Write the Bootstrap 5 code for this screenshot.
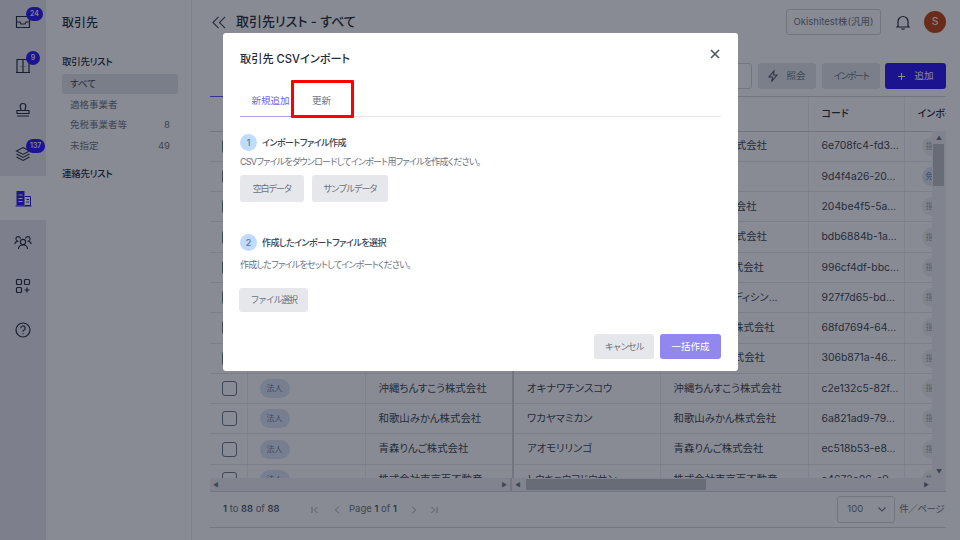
<!DOCTYPE html>
<html lang="ja">
<head>
<meta charset="UTF-8">
<title>取引先 CSVインポート</title>
<link href="https://cdn.jsdelivr.net/npm/bootstrap@5.3.0/dist/css/bootstrap.min.css" rel="stylesheet">
<style>
    html, body { height: 100%; overflow: hidden; }
    body { font-family: Inter, "Noto Sans CJK JP", sans-serif; font-feature-settings: "palt"; font-size: 10px; color: #374151; background: #fff; }
    .app-shell { width: 960px; height: 540px; }
    .rail { width: 46px; background: #e9e8f1; }
    .rail-item { height: 44px; position: relative; color: #1f2937; }
    .rail-item.is-active { background: #fff; color: #2410f5; }
    .rail-badge { position: absolute; top: 7px; left: 26px; min-width: 14px; height: 14px; padding: 0 4px; border-radius: 7px; background: #2410f5; color: #fff; font-size: 7px; font-weight: 500; line-height: 14px; text-align: center; }
    .subnav { width: 146px; padding: 0 13px 0 16px; border-right: 1px solid #eceef2; }
    .subnav-title { font-size: 12px; font-weight: 500; color: #1f2937; height: 45px; line-height: 45px; }
    .subnav-head { font-size: 9.5px; font-weight: 500; letter-spacing: -.3px; color: #1f2937; line-height: 12px; margin-top: 11px; margin-bottom: 6px; }
    .subnav-head.is-lower { margin-top: 12px; }
    .subnav-item { height: 20px; line-height: 20px; padding: 0 8px; margin-bottom: 0.5px; font-size: 9.5px; color: #6b7280; border-radius: 3px; }
    .subnav-item.is-active { background: #e3e4ea; color: #374151; }
    .main-pane { width: 768px; padding: 0 14px 0 18px; }
    .topbar { height: 44px; }
    .back-icon { margin-left: 2px; }
    .page-title { font-size: 13px; font-weight: 500; color: #1f2937; margin-left: 10px; }
    .org-btn { height: 26px; width: 95px; border: 1px solid #d1d5db; border-radius: 3px; font-size: 9.5px; color: #6b7280; line-height: 24px; text-align: center; margin-top: -1px; }
    .bell-icon { margin-left: 15px; }
    .avatar-dot { width: 22px; height: 22px; margin-left: 14px; border-radius: 50%; background: #c2410c; color: #fff; font-size: 10.5px; line-height: 22px; text-align: center; }
    .toolbar { height: 34px; margin-top: 19px; padding-bottom: 8px; border-bottom: 1px solid #d1d5db; position: relative; gap: 6px; }
    .toolbar-tab { position: absolute; left: 0; bottom: -1px; width: 30px; height: 1px; background: #5b4ff0; }
    .tool-btn { width: 58px; height: 26px; border-radius: 3px; background: #e5e7eb; color: #6b7280; font-size: 9.5px; padding: 0; border: 0; }
    .tool-tight { letter-spacing: -1.6px; }
    .tool-ghost { width: 40px; height: 26px; border: 1px solid #d1d5db; border-radius: 3px; background: #fff; }
    .tool-add { background: #2410f5; color: #fff; width: 61px; margin-left: -1px; }
    .grid-wrap { height: 381px; position: relative; overflow: hidden; }
    .data-grid { table-layout: fixed; width: 736px; border-collapse: collapse; margin: 0; font-size: 10.4px; color: #374151; }
    .col-pick { width: 37px; } .col-kind { width: 118px; } .col-name { width: 148px; } .col-kana { width: 147px; }
    .col-formal { width: 148px; } .col-code { width: 96px; } .col-state { width: 42px; }
    .data-grid th { height: 34px; font-weight: 500; font-size: 10px; color: #1f2937; padding: 0 13px; border-bottom: 1px solid #d1d5db; border-right: 1px solid #eceef2; white-space: nowrap; overflow: hidden; }
    .data-grid td { height: 30.3px; padding: 0 13px; border-bottom: 1px solid #e5e7eb; border-right: 1px solid #eceef2; white-space: nowrap; overflow: hidden; }
    .data-grid .pin-edge { border-right: 2px solid #d1d5db; }
    .data-grid .pick-cell { padding: 0 0 0 12px; }
    .data-grid .state-cell { padding-left: 17px; padding-right: 0; }
    .pick-box { display: block; width: 15px; height: 15px; border: 1px solid #6b7280; border-radius: 3px; background: #fff; }
    .kind-pill { display: inline-block; width: 30px; height: 19px; margin-left: -1px; border-radius: 10px; background: #dbe4f7; color: #6b7fa8; font-size: 8px; line-height: 19px; text-align: center; }
    .state-pill { display: inline-block; width: 30px; height: 19px; padding-left: 4px; border-radius: 10px; background: #eef0f3; color: #9ca3af; font-size: 8px; line-height: 19px; }
    .state-pill.is-exempt { background: #dbe4f7; color: #6b7fa8; }
    .scroll-y { position: absolute; top: 34px; right: 0; bottom: 0; width: 14px; background: #f1f1f4; }
    .scroll-y-thumb { position: absolute; top: 13px; left: 1px; width: 11px; height: 42px; background: #bfc0c6; }
    .scroll-x { width: 736px; height: 14px; border-bottom: 1px solid #d1d5db; background: #f1f1f4; }
    .scroll-x-left { width: 302px; border-right: 2px solid #d1d5db; }
    .scroll-x-right { width: 420px; position: relative; }
    .scroll-x-thumb { position: absolute; left: 14px; top: 1px; width: 180px; height: 11px; background: #bfc0c6; }
    .scroll-tip { font-size: 6px; color: #6b7280; line-height: 13px; padding: 0 3px; }
    .pager-bar { height: 36px; border-bottom: 1px solid #d1d5db; font-size: 9.5px; color: #6b7280; padding-left: 13px; padding-right: 2px; }
    .pager-bar b { color: #374151; font-weight: 500; }
    .pager-count { width: 88px; }
    .pager-icons { color: #9ca3af; gap: 15px; }
    .pager-page { margin-left: 9px; }
    .pager-icons.is-next { margin-left: 14px; gap: 13px; }
    .size-select { width: 58px; height: 27px; border: 1px solid #d1d5db; border-radius: 3px; padding: 0 8px 0 9px; }
    .size-unit { letter-spacing: -.5px; }
    /* dialog */
    .dim-layer { position: absolute; inset: 0; background: rgba(17, 24, 39, .5); }
    .import-dialog { position: absolute; left: 223px; top: 33px; width: 515px; height: 338px; background: #fff; border-radius: 3px; padding: 0 17px; }
    .dialog-title { font-size: 11.2px; font-weight: 500; color: #1f2937; height: 26px; line-height: 26px; margin-top: 13px; }
    .dialog-close { position: absolute; top: 16px; right: 18px; color: #4b5563; }
    .dialog-tabs { height: 37px; margin-top: 8px; border-bottom: 1px solid #e5e7eb; }
    .dialog-tab { width: 51px; height: 37px; line-height: 42px; text-align: center; font-size: 9.5px; color: #6d5ff0; border-bottom: 1px solid #a89ff2; padding-left: 10px; }
    .dialog-tab.is-idle { width: 61px; color: #6b7280; border-bottom: 0; padding-left: 0; }
    .red-mark { position: absolute; left: 68px; top: 47px; width: 63px; height: 38px; border: 3.5px solid #ff0000; border-radius: 1px; }
    .step-head { font-size: 9px; font-weight: 500; letter-spacing: -.5px; color: #374151; height: 17px; }
    .step-one { margin-top: 17px; }
    .step-two { margin-top: 32px; }
    .step-num { width: 17px; height: 17px; border-radius: 50%; background: #bfdbfe; color: #64748b; font-size: 9px; letter-spacing: 0; line-height: 17px; text-align: center; margin-right: 5px; }
    .step-text { font-size: 9px; letter-spacing: -.75px; color: #6b7280; line-height: 12px; margin-top: 5px; }
    .step-two + .step-text { margin-top: 8px; }
    .step-actions { margin-top: 7px; }
    .soft-btn { height: 27px; border-radius: 3px; background: #e5e7eb; color: #6b7280; font-size: 9px; letter-spacing: -1.3px; text-align: center; line-height: 27px; border: 0; padding: 0; }
    .btn-blank { width: 64px; }
    .btn-sample { width: 76px; }
    .btn-file { display: block; width: 69px; height: 24px; line-height: 24px; margin-top: 17px; margin-left: -1px; }
    .btn-cancel { width: 60px; height: 25px; line-height: 25px; }
    .solid-btn { width: 61px; height: 25px; line-height: 25px; margin-left: 1px; background: #9287ef; color: #fff; font-size: 9.5px; letter-spacing: 0; }
    .dialog-foot { position: absolute; right: 17px; bottom: 12px; gap: 5px; }
</style>
</head>
<body>
<div class="app-shell d-flex position-relative overflow-hidden">

    <!-- icon rail -->
    <div class="rail flex-shrink-0">
        <div class="rail-item d-flex align-items-center justify-content-center">
            <svg width="16" height="16" viewBox="0 0 16 16" fill="none" stroke="currentColor" stroke-width="1.2"><path d="M1.5 2.5h13v11h-13zM1.5 8h3.5l1 2h4l1-2h3.5"/></svg>
            <span class="rail-badge">24</span>
        </div>
        <div class="rail-item d-flex align-items-center justify-content-center">
            <svg width="16" height="16" viewBox="0 0 16 16" fill="none" stroke="currentColor" stroke-width="1.2"><path d="M1 14.5h14M2 14.5v-13h12v13M8 1.5v13"/><path d="M6 8.5v.5M10 8.5v.5"/></svg>
            <span class="rail-badge">9</span>
        </div>
        <div class="rail-item d-flex align-items-center justify-content-center">
            <svg width="16" height="16" viewBox="0 0 16 16" fill="none" stroke="currentColor" stroke-width="1.2"><path d="M6 8.5c0-2-.8-2.5-.8-4.2a2.8 2.8 0 0 1 5.6 0c0 1.7-.8 2.2-.8 4.2M2 8.5h12v3H2zM2 14h12"/></svg>
        </div>
        <div class="rail-item d-flex align-items-center justify-content-center">
            <svg width="16" height="16" viewBox="0 0 16 16" fill="none" stroke="currentColor" stroke-width="1.1"><path d="M8 1.5l6.500 3.500L8 8.500 1.500 5zM1.500 8L8 11.500 14.500 8M1.500 11L8 14.500l6.500-3.500"/></svg>
            <span class="rail-badge">137</span>
        </div>
        <div class="rail-item is-active d-flex align-items-center justify-content-center">
            <svg width="17" height="17" viewBox="0 0 17 17"><path fill="currentColor" d="M1.5 1h8v14.500h-8z"/><path fill="none" stroke="currentColor" d="M10 6.500h5.500v9H10M.5 16h16"/><path stroke="#fff" d="M3.500 5h4M3.500 8.500h4M3.500 11.500h4"/><path stroke="currentColor" d="M11.500 9.500h2.500M11.500 12h2.500"/></svg>
        </div>
        <div class="rail-item d-flex align-items-center justify-content-center">
            <svg width="18" height="16" viewBox="0 0 18 16" fill="none" stroke="currentColor" stroke-width="1.1"><circle cx="9" cy="8" r="2.6"/><path d="M4.500 15c0-2.500 2-4 4.500-4s4.500 1.500 4.500 4"/><path d="M6.500 4.800a2.300 2.300 0 1 0-3 2.300C2 7.500 1 8.500.6 10M11.500 4.800a2.300 2.300 0 1 1 3 2.300c1.500.4 2.500 1.400 2.900 2.900"/></svg>
        </div>
        <div class="rail-item d-flex align-items-center justify-content-center">
            <svg width="16" height="16" viewBox="0 0 16 16" fill="none" stroke="currentColor" stroke-width="1.2"><rect x="1.5" y="1.5" width="5" height="5" rx="1"/><rect x="9.5" y="1.5" width="5" height="5" rx="1"/><rect x="1.5" y="9.5" width="5" height="5" rx="1"/><path d="M12 9.500v5M9.500 12h5"/></svg>
        </div>
        <div class="rail-item d-flex align-items-center justify-content-center">
            <svg width="16" height="16" viewBox="0 0 16 16" fill="none" stroke="currentColor" stroke-width="1.2"><circle cx="8" cy="8" r="7"/><path d="M5.800 6.200a2.200 2.200 0 1 1 3.300 1.900c-.7.400-1.100.8-1.100 1.600"/><path d="M8 11.300v1"/></svg>
        </div>
    </div>

    <!-- sub navigation -->
    <div class="subnav flex-shrink-0">
        <div class="subnav-title">取引先</div>
        <div class="subnav-head">取引先リスト</div>
        <div class="subnav-item is-active">すべて</div>
        <div class="subnav-item">適格事業者</div>
        <div class="subnav-item d-flex justify-content-between"><span>免税事業者等</span><span>8</span></div>
        <div class="subnav-item d-flex justify-content-between"><span>未指定</span><span>49</span></div>
        <div class="subnav-head is-lower">連絡先リスト</div>
    </div>

    <!-- main -->
    <div class="main-pane flex-shrink-0">
        <div class="topbar d-flex align-items-center">
            <svg class="back-icon" width="14" height="13" viewBox="0 0 15 13" fill="none" stroke="#374151" stroke-width="1.2"><path d="M7 .5L1 6.500l6 6M14 .5l-6 6 6 6"/></svg>
            <div class="page-title flex-grow-1">取引先リスト - すべて</div>
            <div class="org-btn">Okishitest株(汎用)</div>
            <svg class="bell-icon" width="14" height="15" viewBox="0 0 14 15" fill="none" stroke="#1f2937" stroke-width="1.2"><path d="M2 11V6.500a5 5 0 0 1 10 0V11l1 1H1zM5.500 13.500c.5 1 2.500 1 3 0"/></svg>
            <div class="avatar-dot">S</div>
        </div>
        <div class="toolbar d-flex justify-content-end align-items-start">
            <div class="toolbar-tab"></div>
            <div class="tool-ghost"></div>
            <div class="tool-btn d-flex align-items-center justify-content-center gap-2">
                <svg width="10" height="12" viewBox="0 0 10 12" fill="none" stroke="#4b5563" stroke-width="1.1"><path d="M6 .8L1 7h3.500L3.800 11.200 9 5H5.500z"/></svg>
                <span>照会</span>
            </div>
            <div class="tool-btn tool-tight d-flex align-items-center justify-content-center">インポート</div>
            <div class="tool-btn tool-add d-flex align-items-center justify-content-center gap-2">
                <svg width="9" height="9" viewBox="0 0 9 9" stroke="#fff" stroke-width="1.1"><path d="M4.500 1v7M1 4.500h7"/></svg>
                <span>追加</span>
            </div>
        </div>
        <div class="grid-wrap">
            <table class="data-grid">
                <colgroup><col class="col-pick"><col class="col-kind"><col class="col-name"><col class="col-kana"><col class="col-formal"><col class="col-code"><col class="col-state"></colgroup>
                <thead><tr><th></th><th>種別</th><th class="pin-edge">取引先名</th><th>フリガナ</th><th>正式名称</th><th>コード</th><th>インボイス</th></tr></thead>
                <tbody id="grid-body"></tbody>
            </table>
            <div class="scroll-y">
                <div class="scroll-tip text-center">▲</div>
                <div class="scroll-y-thumb"></div>
                <div class="scroll-tip text-center position-absolute bottom-0 w-100">▼</div>
            </div>
        </div>
        <div class="scroll-x d-flex">
            <div class="scroll-x-left d-flex justify-content-between"><span class="scroll-tip">◀</span><span class="scroll-tip">▶</span></div>
            <div class="scroll-x-right d-flex justify-content-between"><span class="scroll-tip">◀</span><div class="scroll-x-thumb"></div><span class="scroll-tip">▶</span></div>
        </div>
        <div class="pager-bar d-flex align-items-center">
            <span class="pager-count"><b>1</b> to <b>88</b> of <b>88</b></span>
            <div class="pager-icons d-flex align-items-center">
                <svg width="8" height="8" viewBox="0 0 8 8" fill="none" stroke="currentColor"><path d="M1 1v6M6.500 1L3.500 4l3 3"/></svg>
                <svg width="6" height="8" viewBox="0 0 6 8" fill="none" stroke="currentColor"><path d="M5 .5L1.500 4 5 7.500"/></svg>
            </div>
            <span class="pager-page">Page <b>1</b> of <b>1</b></span>
            <div class="pager-icons is-next d-flex align-items-center">
                <svg width="6" height="8" viewBox="0 0 6 8" fill="none" stroke="currentColor"><path d="M1 .5L4.500 4 1 7.500"/></svg>
                <svg width="8" height="8" viewBox="0 0 8 8" fill="none" stroke="currentColor"><path d="M7 1v6M1.500 1l3 3-3 3"/></svg>
            </div>
            <div class="ms-auto d-flex align-items-center gap-1">
                <div class="size-select d-flex align-items-center justify-content-between"><span>100</span>
                    <svg width="8" height="5" viewBox="0 0 8 5" fill="none" stroke="#6b7280" stroke-width="1.1"><path d="M.5.500L4 4 7.500.500"/></svg>
                </div>
                <span class="size-unit">件／ページ</span>
            </div>
        </div>
    </div>

    <!-- modal -->
    <div class="dim-layer"></div>
    <div class="import-dialog">
        <div class="dialog-title">取引先 CSVインポート</div>
        <svg class="dialog-close" width="10" height="10" viewBox="0 0 10 10" stroke="currentColor" stroke-width="1.6"><path d="M1 1l8 8M9 1L1 9"/></svg>
        <div class="dialog-tabs d-flex">
            <div class="dialog-tab">新規追加</div>
            <div class="dialog-tab is-idle">更新</div>
        </div>
        <div class="red-mark"></div>

        <div class="step-head step-one d-flex align-items-center">
            <div class="step-num">1</div><span>インポートファイル作成</span>
        </div>
        <div class="step-text">CSVファイルをダウンロードしてインポート用ファイルを作成ください。</div>
        <div class="step-actions d-flex gap-2">
            <button class="soft-btn btn-blank">空白データ</button>
            <button class="soft-btn btn-sample">サンプルデータ</button>
        </div>

        <div class="step-head step-two d-flex align-items-center">
            <div class="step-num">2</div><span>作成したインポートファイルを選択</span>
        </div>
        <div class="step-text">作成したファイルをセットしてインポートください。</div>
        <button class="soft-btn btn-file">ファイル選択</button>

        <div class="dialog-foot d-flex">
            <button class="soft-btn btn-cancel">キャンセル</button>
            <button class="soft-btn solid-btn">一括作成</button>
        </div>
    </div>
</div>

<script src="https://cdn.jsdelivr.net/npm/bootstrap@5.3.0/dist/js/bootstrap.bundle.min.js"></script>
<script>
    // rows: name, kana, formal name, code, exempt
    const rows = [
        ['福岡明太子株式会社', 'フクオカメンタイコ', '福岡明太子株式会社', '6e708fc4-fd3...', false],
        ['山田太郎', 'ヤマダタロウ', '山田太郎', '9d4f4a26-20...', true],
        ['京都抹茶株式会社', 'キョウトマッチャ', '京都抹茶株式会社', '204be4f5-5a...', false],
        ['鹿児島黒豚株式会社', 'カゴシマクロブタ', '鹿児島黒豚株式会社', 'bdb6884b-1a...', false],
        ['栃木いちご株式会社', 'トチギイチゴ', '栃木いちご株式会社', '996cf4df-bbc...', false],
        ['札幌プラザエディシン...', 'サッポロプラザ', '札幌プラザエディシン...', '927f7d65-bd...', false],
        ['熊本デコポン株式会社', 'クマモトデコポン', '熊本デコポン株式会社', '68fd7694-64...', false],
        ['広島もみじ株式会社', 'ヒロシマモミジ', '広島もみじ株式会社', '306b871a-46...', false],
        ['沖縄ちんすこう株式会社', 'オキナワチンスコウ', '沖縄ちんすこう株式会社', 'c2e132c5-82f...', false],
        ['和歌山みかん株式会社', 'ワカヤマミカン', '和歌山みかん株式会社', '6a821ad9-79...', false],
        ['青森りんご株式会社', 'アオモリリンゴ', '青森りんご株式会社', 'ec518b53-e8...', false],
        ['株式会社東京百不動産', 'トウキョウフドウサン', '株式会社東京百不動産', 'a4672c06-c9...', false]
    ];
    document.getElementById('grid-body').innerHTML = rows.map(r => `
        <tr>
            <td class="pick-cell"><span class="pick-box"></span></td>
            <td><span class="kind-pill">法人</span></td>
            <td class="pin-edge">${r[0]}</td>
            <td>${r[1]}</td>
            <td>${r[2]}</td>
            <td>${r[3]}</td>
            <td class="state-cell"><span class="state-pill ${r[4] ? 'is-exempt' : ''}">${r[4] ? '免税' : '指定'}</span></td>
        </tr>`).join('');
</script>
</body>
</html>
